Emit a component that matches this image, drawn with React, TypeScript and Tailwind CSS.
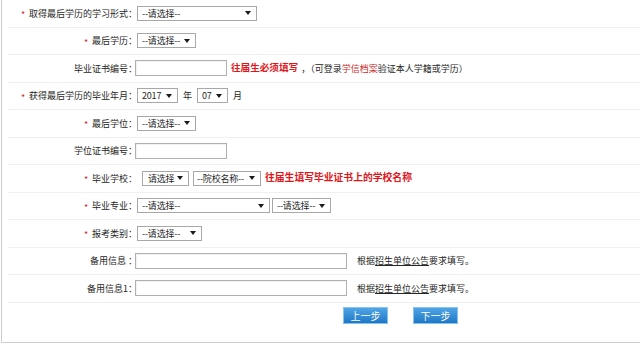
import React from "react";

const Arrow = () => (
  <svg width="6" height="4" viewBox="0 0 6 4" className="shrink-0">
    <path d="M0 0H6L3 4Z" fill="#1a1a1a" />
  </svg>
);

function Select({ cls, text }: { cls: string; text: string }) {
  return (
    <div
      className={
        "flex items-center justify-between h-[15px] border border-[#a8a8a8] bg-white pr-[5px] text-[#1f1f1f] leading-none shrink-0 " +
        cls
      }
    >
      <span className="whitespace-nowrap tracking-[-0.2px]">{text}</span>
      <Arrow />
    </div>
  );
}

function Input({ cls }: { cls: string }) {
  return (
    <div
      className={
        "h-[16px] border border-[#b0b0b0] bg-white shadow-[inset_1px_1px_1px_rgba(0,0,0,0.06)] shrink-0 " +
        cls
      }
    />
  );
}

function Row({
  req,
  label,
  children,
}: {
  req?: boolean;
  label: string;
  children?: React.ReactNode;
}) {
  return (
    <div className="flex items-center h-[27.5px] border-b border-[#f0f0f0]">
      <div className="w-[129px] shrink-0 flex items-center justify-end leading-none whitespace-nowrap">
        {req && (
          <span className="text-[#d21f1f] text-[9px] leading-none w-[8px] pt-[3px]">*</span>
        )}
        <span>{label}</span>
      </div>
      {children}
    </div>
  );
}

export default function App() {
  return (
    <div className="w-[640px] h-[344px] bg-white pl-[1px] font-['Noto_Sans_CJK_SC',sans-serif] text-[9px] text-[#262626] overflow-hidden">
      <div className="h-[343px] border-l border-b border-[#cdcdcd]">
        <div className="ml-[6px]">
          <Row req label="取得最后学历的学习形式：">
            <Select cls="w-[120px] pl-[4px]" text="--请选择--" />
          </Row>
          <Row req label="最后学历：">
            <Select cls="w-[59px] pl-[4px]" text="--请选择--" />
          </Row>
          <Row label="毕业证书编号：">
            <Input cls="w-[92px] ml-[-2px]" />
            <span className="ml-[4px] text-[#e0161b] font-bold text-[9.6px] leading-none whitespace-nowrap">
              往届生必须填写
            </span>
            <span className="ml-[3px] leading-none whitespace-nowrap">
              ，（可登录<span className="text-[#cc2a2a]">学信档案</span>验证本人学籍或学历）
            </span>
          </Row>
          <Row req label="获得最后学历的毕业年月：">
            <Select cls="w-[41px] pl-[4px]" text="2017" />
            <span className="mx-[5px] leading-none">年</span>
            <Select cls="w-[31px] pl-[4px]" text="07" />
            <span className="ml-[5px] leading-none">月</span>
          </Row>
          <Row req label="最后学位：">
            <Select cls="w-[59px] pl-[4px]" text="--请选择--" />
          </Row>
          <Row label="学位证书编号：">
            <Input cls="w-[92px] ml-[-2px]" />
          </Row>
          <Row req label="毕业学校：">
            <Select cls="ml-[5px] w-[47px] pl-[5px]" text="请选择" />
            <Select cls="ml-[4px] w-[68px] pl-[3px]" text="--院校名称--" />
            <span className="ml-[4px] text-[#e0161b] font-bold text-[9.8px] leading-none whitespace-nowrap">
              往届生填写毕业证书上的学校名称
            </span>
          </Row>
          <Row req label="毕业专业：">
            <Select cls="w-[133px] pl-[4px]" text="--请选择--" />
            <Select cls="ml-[2px] w-[59px] pl-[4px]" text="--请选择--" />
          </Row>
          <Row req label="报考类别：">
            <Select cls="w-[65px] pl-[4px]" text="--请选择--" />
          </Row>
          <Row label="备用信息 ：">
            <Input cls="w-[212px] ml-[-2px]" />
            <span className="ml-[10px] leading-none whitespace-nowrap">
              根据<span className="underline underline-offset-1">招生单位公告</span>要求填写。
            </span>
          </Row>
          <Row label="备用信息1：">
            <Input cls="w-[212px] ml-[-2px]" />
            <span className="ml-[10px] leading-none whitespace-nowrap">
              根据<span className="underline underline-offset-1">招生单位公告</span>要求填写。
            </span>
          </Row>
          <div className="flex items-center pt-[4.5px] pl-[335px] gap-[25px]">
            <div className="w-[45px] h-[17px] flex items-center justify-center bg-gradient-to-b from-[#4fa5e6] to-[#1f77c5] border border-[#86c3ee] text-white text-[10px] leading-none">
              上一步
            </div>
            <div className="w-[45px] h-[17px] flex items-center justify-center bg-gradient-to-b from-[#4fa5e6] to-[#1f77c5] border border-[#86c3ee] text-white text-[10px] leading-none">
              下一步
            </div>
          </div>
        </div>
      </div>
    </div>
  );
}
